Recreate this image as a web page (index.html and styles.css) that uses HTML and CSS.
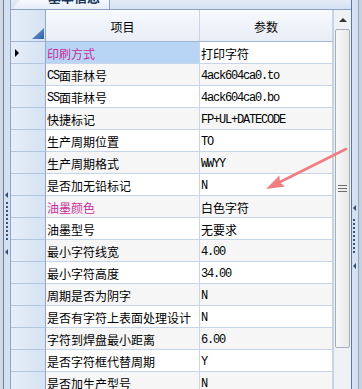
FILE: index.html
```html
<!DOCTYPE html>
<html lang="zh-CN">
<head>
    <meta charset="UTF-8">
    <meta name="viewport" content="width=device-width, initial-scale=1.0">
    <title>参数设置</title>
    <link rel="stylesheet" href="styles.css">
</head>
<body>
    <div class="window">
        <!-- left splitter -->
        <div class="splitter left">
            <span class="nub"></span>
            <span class="dots"></span>
            <span class="nub"></span>
        </div>

        <div class="main">
            <div class="tabstrip">
                <div class="tab"><span>基本信息</span></div>
            </div>

            <div class="content">
                <div class="grid">
                    <div class="row head">
                        <div class="rh corner">
                            <svg width="12" height="11" viewBox="0 0 12 11">
                                <defs>
                                    <linearGradient id="cg" x1="0" y1="0" x2="1" y2="1">
                                        <stop offset="0" stop-color="#7fa6dc"/>
                                        <stop offset="1" stop-color="#2c5ea8"/>
                                    </linearGradient>
                                </defs>
                                <polygon points="12,0 12,11 0,11" fill="url(#cg)"/>
                            </svg>
                        </div>
                        <div class="hc">项目</div>
                        <div class="hc">参数</div>
                    </div>

                    <div class="row current">
                        <div class="rh"><span class="marker"></span></div>
                        <div class="c item pink">印刷方式</div>
                        <div class="c val">打印字符</div>
                    </div>
                    <div class="row">
                        <div class="rh"></div>
                        <div class="c item"><span class="a">CS</span>面菲林号</div>
                        <div class="c val"><span class="a">4ack604ca0.to</span></div>
                    </div>
                    <div class="row">
                        <div class="rh"></div>
                        <div class="c item"><span class="a">SS</span>面菲林号</div>
                        <div class="c val"><span class="a">4ack604ca0.bo</span></div>
                    </div>
                    <div class="row">
                        <div class="rh"></div>
                        <div class="c item">快捷标记</div>
                        <div class="c val"><span class="a">FP+UL+DATECODE</span></div>
                    </div>
                    <div class="row">
                        <div class="rh"></div>
                        <div class="c item">生产周期位置</div>
                        <div class="c val"><span class="a">TO</span></div>
                    </div>
                    <div class="row">
                        <div class="rh"></div>
                        <div class="c item">生产周期格式</div>
                        <div class="c val"><span class="a">WWYY</span></div>
                    </div>
                    <div class="row">
                        <div class="rh"></div>
                        <div class="c item">是否加无铅标记</div>
                        <div class="c val"><span class="a">N</span></div>
                    </div>
                    <div class="row">
                        <div class="rh"></div>
                        <div class="c item pink">油墨颜色</div>
                        <div class="c val">白色字符</div>
                    </div>
                    <div class="row">
                        <div class="rh"></div>
                        <div class="c item">油墨型号</div>
                        <div class="c val">无要求</div>
                    </div>
                    <div class="row">
                        <div class="rh"></div>
                        <div class="c item">最小字符线宽</div>
                        <div class="c val"><span class="a">4.00</span></div>
                    </div>
                    <div class="row">
                        <div class="rh"></div>
                        <div class="c item">最小字符高度</div>
                        <div class="c val"><span class="a">34.00</span></div>
                    </div>
                    <div class="row">
                        <div class="rh"></div>
                        <div class="c item">周期是否为阴字</div>
                        <div class="c val"><span class="a">N</span></div>
                    </div>
                    <div class="row">
                        <div class="rh"></div>
                        <div class="c item">是否有字符上表面处理设计</div>
                        <div class="c val"><span class="a">N</span></div>
                    </div>
                    <div class="row">
                        <div class="rh"></div>
                        <div class="c item">字符到焊盘最小距离</div>
                        <div class="c val"><span class="a">6.00</span></div>
                    </div>
                    <div class="row">
                        <div class="rh"></div>
                        <div class="c item">是否字符框代替周期</div>
                        <div class="c val"><span class="a">Y</span></div>
                    </div>
                    <div class="row">
                        <div class="rh"></div>
                        <div class="c item">是否加生产型号</div>
                        <div class="c val"><span class="a">N</span></div>
                    </div>
                </div>

                <div class="vscroll">
                    <div class="up"><span></span></div>
                    <div class="thumb"><span class="lines"></span></div>
                </div>
            </div>
        </div>

        <!-- right splitter -->
        <div class="splitter right">
            <span class="nub"></span>
            <span class="dots"></span>
            <span class="nub"></span>
        </div>

        <!-- annotation arrow drawn over the grid -->
        <svg class="annot" width="362" height="389" viewBox="0 0 362 389">
            <line x1="346" y1="149" x2="279" y2="182.5" stroke="#f07d80" stroke-width="2.6" stroke-linecap="round"/>
            <polygon points="266,189 279.4,175.4 280,182.6 285,186.6" fill="#f07d80"/>
        </svg>
    </div>
</body>
</html>
```

FILE: styles.css
```css
html, body {
    margin: 0;
    padding: 0;
}
body {
    font-family: "Noto Sans CJK SC", sans-serif;
    font-size: 12px;
    color: #000;
    background: #dfe8f5;
    overflow: hidden;
}
.window {
    position: relative;
    display: flex;
    width: 362px;
    height: 389px;
    overflow: hidden;
}

/* splitters */
.splitter {
    display: flex;
    flex-direction: column;
    align-items: center;
    box-sizing: border-box;
}
.splitter.left {
    width: 11px;
    padding-top: 192px;
    padding-left: 2px;
    background: linear-gradient(to right, #d3d9e1 0 3px, #6a7f9b 3px 4px, #d4e1f2 4px 10px, #8ea6c6 10px 11px);
}
.splitter.right {
    width: 11px;
    padding-top: 205px;
    padding-right: 5px;
    background: linear-gradient(to right, #62789a 0 1px, #d4e1f2 1px 7px, #8ea6c6 7px 8px, #c9d1dc 8px 11px);
}
.nub {
    width: 0;
    height: 0;
    border-right: 3px solid #2f4f7a;
    border-top: 3px solid transparent;
    border-bottom: 3px solid transparent;
}
.dots {
    width: 2px;
    height: 40px;
    margin: 4px 0 7px;
    background: repeating-linear-gradient(to bottom, #36577f 0 2px, transparent 2px 4px);
}
.splitter.right .dots {
    height: 34px;
    margin: 8px 0 10px;
}

/* main column */
.main {
    display: flex;
    flex-direction: column;
    width: 340px;
}
.tabstrip {
    height: 9px;
    border-bottom: 1px solid #8aa2c4;
    background: linear-gradient(to bottom, #e3ebf6, #d6e2f2);
    display: flex;
    padding-left: 1px;
}
.tab {
    width: 98px;
    height: 9px;
    box-sizing: border-box;
    border-right: 1px solid #8aa2c4;
    background: linear-gradient(to bottom, #f6f9fd, #e7eef8);
    overflow: hidden;
    clip-path: polygon(8px 0, 100% 0, 100% 100%, 0 100%);
}
.tab span {
    display: block;
    margin: -12px 0 0 36px;
    font-size: 13px;
    font-weight: bold;
    line-height: 18px;
    color: #163459;
}

.content {
    display: flex;
    flex: 1;
}

/* grid */
.grid {
    width: 322px;
    background: #fff;
}
.row {
    display: grid;
    grid-template-columns: 35px 154px 133px;
    height: 22px;
}
.row > div {
    box-sizing: border-box;
    border-right: 1px solid #c6d5e9;
    border-bottom: 1px solid #c6d5e9;
}
.row:nth-child(odd) .c {
    background: #f6f6f6;
}
.row.head {
    height: 32px;
}
.row.head > div {
    border-bottom: 1px solid #9fb5d2;
}
.hc {
    display: flex;
    align-items: center;
    justify-content: center;
    background: linear-gradient(to bottom, #f7f9fd, #e8eef7);
    padding-top: 1px;
}
.rh {
    display: flex;
    align-items: center;
    background: linear-gradient(to right, #e5edf8, #d7e3f3);
    padding-left: 4px;
}
.row > .rh {
    border-right: 1px solid #8fa8c8;
    border-bottom: 1px solid #b4c6de;
}
.rh.corner {
    align-items: flex-end;
    justify-content: flex-end;
    padding: 0 1px 2px 0;
}
.rh.corner svg {
    display: block;
}
.marker {
    width: 0;
    height: 0;
    border-left: 4px solid #000;
    border-top: 4px solid transparent;
    border-bottom: 4px solid transparent;
}
.c {
    display: flex;
    align-items: center;
    padding: 2px 0 0 1px;
    white-space: nowrap;
    overflow: hidden;
}
.row.current .item {
    background: #b8d5f6;
}
.row.current .val {
    background: #fff;
}
.pink {
    color: #c5309a;
}
.a {
    font-family: "Liberation Mono", monospace;
    font-size: 12px;
    letter-spacing: -1.2px;
}

/* vertical scrollbar */
.vscroll {
    width: 18px;
    background: #eef1f5;
    border-left: 1px solid #c9d3df;
    box-sizing: border-box;
    padding: 0 1px;
}
.up {
    height: 19px;
    display: flex;
    align-items: center;
    justify-content: center;
}
.up span {
    width: 0;
    height: 0;
    border-bottom: 4px solid #333;
    border-left: 4px solid transparent;
    border-right: 4px solid transparent;
}
.thumb {
    height: 319px;
    box-sizing: border-box;
    border: 1px solid #a5adb8;
    border-radius: 2px;
    background: linear-gradient(to right, #f7f7f7, #eaeaea);
    display: flex;
    align-items: center;
    justify-content: center;
}
.lines {
    width: 9px;
    height: 7px;
    background: repeating-linear-gradient(to bottom, #6b6b6b 0 1px, transparent 1px 3px);
}

.annot {
    position: absolute;
    left: 0;
    top: 0;
    pointer-events: none;
}
```
